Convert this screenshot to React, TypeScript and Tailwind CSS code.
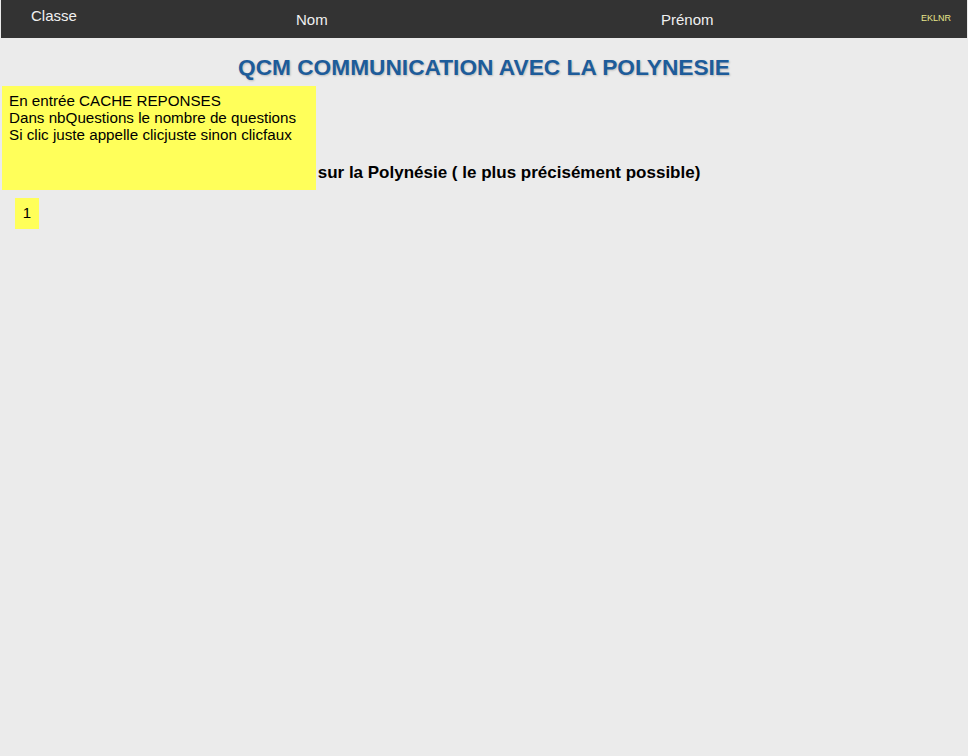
export default function App() {
  return (
    <div className="relative min-h-[756px] bg-[#ebebeb] font-['Liberation_Sans',Arial,sans-serif] text-black">
      {/* header */}
      <div className="mx-px flex h-[38px] items-start bg-[#333333] text-[15px] text-[#f0f0f0]">
        <div className="w-[295px] pl-[30px] pt-[5px]">Classe</div>
        <div className="w-[365px] pt-[9px]">Nom</div>
        <div className="flex-1 pt-[9px]">Prénom</div>
        <div className="pr-[16px] pt-[12px] text-[9px] text-[#e6e68c]">EKLNR</div>
      </div>

      <h1 className="pt-[15px] text-center text-[22.7px] font-bold leading-7 text-[#1d5c9a] [text-shadow:1px_1px_2px_rgba(0,0,0,0.2)]">
        QCM COMMUNICATION AVEC LA POLYNESIE
      </h1>

      <div className="mt-[82px] pl-[56px] text-[17px] font-bold leading-5">
        Où se trouve la station terrestre sur la Polynésie ( le plus précisément possible)
      </div>

      <div className="mt-[15px] ml-[15px] flex h-[31px] w-[24px] items-center justify-center bg-[#ffff5a] text-[15px]">
        1
      </div>

      {/* note overlay */}
      <div className="absolute left-[2px] top-[86px] h-[104px] w-[314px] bg-[#ffff5a] px-[7px] pt-[6px] text-[15.2px] leading-[17px]">
        <div>En entrée CACHE REPONSES</div>
        <div>Dans nbQuestions le nombre de questions</div>
        <div>Si clic juste appelle clicjuste sinon clicfaux</div>
      </div>
    </div>
  );
}
